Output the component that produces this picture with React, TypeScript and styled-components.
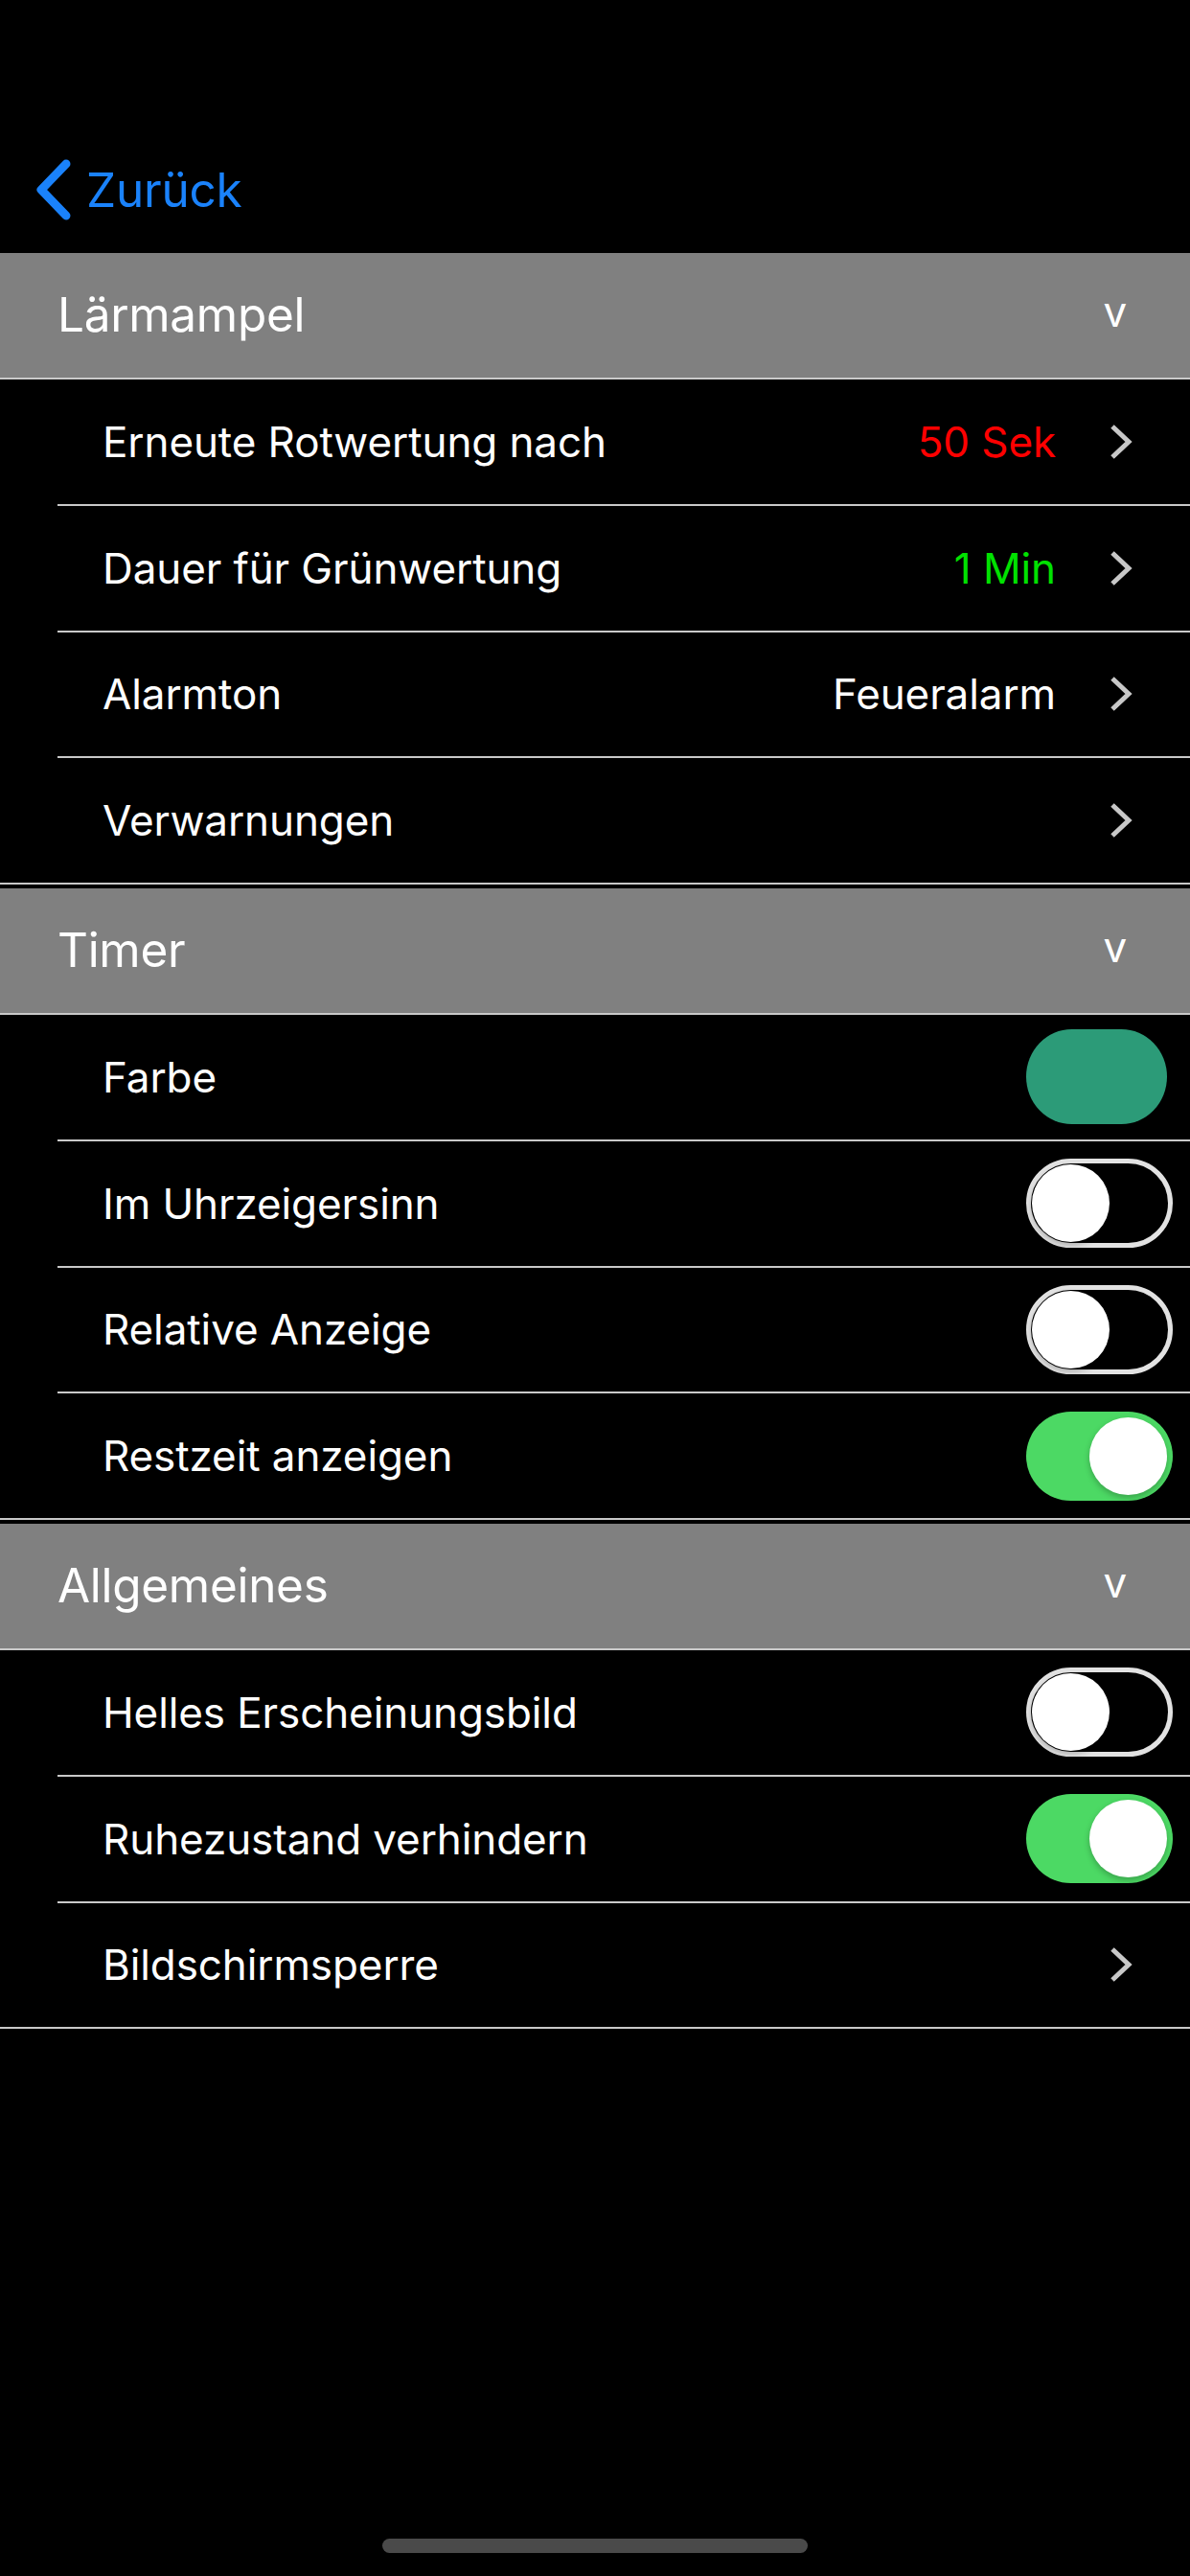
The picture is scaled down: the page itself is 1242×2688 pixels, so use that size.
import React from "react";
import styled, { createGlobalStyle } from "styled-components";

const GlobalStyle = createGlobalStyle`
  html, body {
    margin: 0;
    padding: 0;
    background: #000;
  }
  body {
    font-family: "Inter", "Noto Sans", "Liberation Sans", sans-serif;
    -webkit-font-smoothing: antialiased;
  }
`;

const Screen = styled.div`
  width: 1242px;
  height: 2688px;
  background: #000;
  display: flex;
  flex-direction: column;
  overflow: hidden;
`;

const NavBar = styled.div`
  height: 132px;
  padding-top: 132px;
  display: flex;
  align-items: center;
`;

const BackButton = styled.button`
  display: flex;
  align-items: center;
  gap: 15px;
  padding: 0 0 0 37px;
  border: none;
  background: none;
  color: #1a82fb;
  font-family: inherit;
  font-size: 49.5px;
  letter-spacing: -0.2px;
  cursor: pointer;

  svg {
    display: block;
  }
`;

const Section = styled.section`
  & + & {
    margin-top: 4px;
  }
`;

const SectionHeader = styled.div`
  height: 132px;
  box-sizing: border-box;
  background: #808080;
  border-bottom: 2px solid #c9c9c9;
  display: flex;
  align-items: center;
  justify-content: space-between;
  padding: 0 66px 2px 60px;
  color: #fff;
  font-size: 49.5px;
  letter-spacing: -0.3px;
`;

const Caret = styled.span`
  font-size: 44px;
  line-height: 1;
  margin-bottom: 6px;
`;

const Row = styled.div<{ $last?: boolean }>`
  height: 131.75px;
  box-sizing: border-box;
  margin-left: ${(p) => (p.$last ? "0" : "60px")};
  padding-left: ${(p) => (p.$last ? "107px" : "47px")};
  border-bottom: 2px solid #c9c9c9;
  display: flex;
  align-items: center;
  color: #fff;
  font-size: 44px;
  letter-spacing: -0.1px;
`;

const Label = styled.span`
  flex: 1;
`;

const Value = styled.span<{ $color?: string }>`
  color: ${(p) => p.$color ?? "#fff"};
  margin-right: 56px;
`;

const ChevronWrap = styled.span`
  display: flex;
  margin-right: 60px;
`;

const Swatch = styled.div<{ $color: string }>`
  width: 147px;
  height: 99px;
  border-radius: 48px / 50px;
  background: ${(p) => p.$color};
  margin-right: 24px;
`;

const Switch = styled.div<{ $on: boolean }>`
  width: 153px;
  height: 93px;
  box-sizing: border-box;
  border-radius: 47px;
  margin-right: 18px;
  position: relative;
  background: ${(p) => (p.$on ? "#4cd964" : "#000")};
  border: ${(p) => (p.$on ? "none" : "5px solid #e2e2e2")};

  &::after {
    content: "";
    position: absolute;
    top: ${(p) => (p.$on ? "6px" : "1px")};
    left: ${(p) => (p.$on ? "66px" : "1px")};
    width: 81px;
    height: 81px;
    border-radius: 50%;
    background: #fff;
    box-shadow: 0 3px 6px rgba(0, 0, 0, 0.25);
  }
`;

const Spacer = styled.div`
  flex: 1;
`;

const HomeIndicator = styled.div`
  width: 444px;
  height: 15px;
  border-radius: 8px;
  background: #4a4a4a;
  align-self: center;
  margin-bottom: 24px;
`;

const BackChevron = () => (
  <svg width="38" height="64" viewBox="0 0 38 64">
    <path
      d="M32 5 L6 32 L32 59"
      fill="none"
      stroke="#1a82fb"
      strokeWidth="9"
      strokeLinecap="round"
      strokeLinejoin="round"
    />
  </svg>
);

const Chevron = () => (
  <ChevronWrap>
    <svg width="24" height="38" viewBox="0 0 24 38">
      <path
        d="M3 3 L20 19 L3 35"
        fill="none"
        stroke="#c8c8c8"
        strokeWidth="5"
        strokeLinejoin="miter"
      />
    </svg>
  </ChevronWrap>
);

type Item =
  | { label: string; kind: "link"; value?: string; color?: string }
  | { label: string; kind: "switch"; on: boolean }
  | { label: string; kind: "swatch"; color: string };

const sections: { title: string; items: Item[] }[] = [
  {
    title: "Lärmampel",
    items: [
      { label: "Erneute Rotwertung nach", kind: "link", value: "50 Sek", color: "#ff0000" },
      { label: "Dauer für Grünwertung", kind: "link", value: "1 Min", color: "#00e200" },
      { label: "Alarmton", kind: "link", value: "Feueralarm" },
      { label: "Verwarnungen", kind: "link" },
    ],
  },
  {
    title: "Timer",
    items: [
      { label: "Farbe", kind: "swatch", color: "#2c9b78" },
      { label: "Im Uhrzeigersinn", kind: "switch", on: false },
      { label: "Relative Anzeige", kind: "switch", on: false },
      { label: "Restzeit anzeigen", kind: "switch", on: true },
    ],
  },
  {
    title: "Allgemeines",
    items: [
      { label: "Helles Erscheinungsbild", kind: "switch", on: false },
      { label: "Ruhezustand verhindern", kind: "switch", on: true },
      { label: "Bildschirmsperre", kind: "link" },
    ],
  },
];

const Accessory: React.FC<{ item: Item }> = ({ item }) => {
  if (item.kind === "switch") return <Switch $on={item.on} />;
  if (item.kind === "swatch") return <Swatch $color={item.color} />;
  return (
    <>
      {item.value && <Value $color={item.color}>{item.value}</Value>}
      <Chevron />
    </>
  );
};

const App: React.FC = () => {
  return (
    <Screen>
      <GlobalStyle />
      <NavBar>
        <BackButton>
          <BackChevron />
          Zurück
        </BackButton>
      </NavBar>
      {sections.map((section) => (
        <Section key={section.title}>
          <SectionHeader>
            {section.title}
            <Caret>v</Caret>
          </SectionHeader>
          {section.items.map((item, i) => (
            <Row key={item.label} $last={i === section.items.length - 1}>
              <Label>{item.label}</Label>
              <Accessory item={item} />
            </Row>
          ))}
        </Section>
      ))}
      <Spacer />
      <HomeIndicator />
    </Screen>
  );
};

export default App;
